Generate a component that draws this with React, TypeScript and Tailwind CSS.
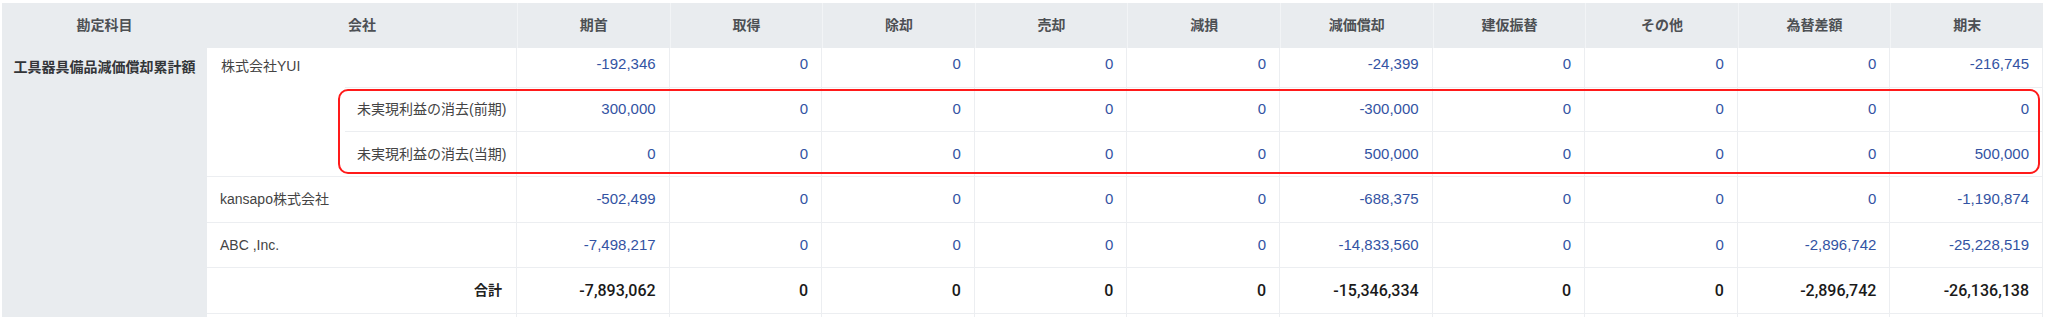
import React from "react";

const COLS = ["期首", "取得", "除却", "売却", "減損", "減価償却", "建仮振替", "その他", "為替差額", "期末"];

type Row = {
  kind: "company" | "sub" | "total";
  label: string;
  values: string[];
};

const ROWS: Row[] = [
  { kind: "company", label: "株式会社YUI", values: ["-192,346", "0", "0", "0", "0", "-24,399", "0", "0", "0", "-216,745"] },
  { kind: "sub", label: "未実現利益の消去(前期)", values: ["300,000", "0", "0", "0", "0", "-300,000", "0", "0", "0", "0"] },
  { kind: "sub", label: "未実現利益の消去(当期)", values: ["0", "0", "0", "0", "0", "500,000", "0", "0", "0", "500,000"] },
  { kind: "company", label: "kansapo株式会社", values: ["-502,499", "0", "0", "0", "0", "-688,375", "0", "0", "0", "-1,190,874"] },
  { kind: "company", label: "ABC ,Inc.", values: ["-7,498,217", "0", "0", "0", "0", "-14,833,560", "0", "0", "-2,896,742", "-25,228,519"] },
  { kind: "total", label: "合計", values: ["-7,893,062", "0", "0", "0", "0", "-15,346,334", "0", "0", "-2,896,742", "-26,136,138"] },
];

const font = "font-['Liberation_Sans','Noto_Sans_CJK_JP',sans-serif]";

function ValueCells({ row, lift }: { row: Row; lift?: boolean }) {
  return (
    <>
      {row.values.map((v, i) => (
        <div
          key={i}
          className={`flex items-center justify-end pr-[13px] border-b border-r border-[#eceef1] ${
            row.kind === "total"
              ? "font-['Roboto','Liberation_Sans',sans-serif] text-[16px] font-medium text-[#1a1a1a]"
              : "text-[15px] text-[#3353a3]"
          } ${lift ? "pb-[6px]" : ""}`}
        >
          {v}
        </div>
      ))}
    </>
  );
}

export default function App() {
  const [yui, sub1, sub2, kansapo, abc, total] = ROWS;

  return (
    <div className={`bg-white w-[2048px] h-[317px] overflow-hidden pl-[2px] pt-[3px] ${font}`}>
      <div className="relative w-[2041px]">
        <div className="grid grid-cols-[205px_138px_172px_repeat(10,minmax(0,1fr))] grid-rows-[45px_40px_44px_45px_46px_45px_46px_45px]">
          {/* header */}
          <div className="bg-[#e9ecef] flex items-center justify-center text-[14px] font-bold text-[#4d5054]">勘定科目</div>
          <div className="col-span-2 bg-[#e9ecef] flex items-center justify-center text-[14px] font-bold text-[#4d5054]">会社</div>
          {COLS.map((c) => (
            <div key={c} className="bg-[#e9ecef] border-l border-[#f2f4f6] flex items-center justify-center text-[14px] font-bold text-[#4d5054]">
              {c}
            </div>
          ))}

          {/* account column */}
          <div className="row-span-7 bg-[#e9ecef] flex justify-center pt-[9px] text-[14px] font-bold text-[#333538]">
            工具器具備品減価償却累計額
          </div>

          {/* 株式会社YUI group */}
          <div className="row-span-3 border-b border-[#eceef1] pl-[14px] pt-[8px] text-[14px] text-[#444] whitespace-nowrap">
            {yui.label}
          </div>
          <div className="border-b border-r border-[#eceef1]" />
          <ValueCells row={yui} lift />

          {[sub1, sub2].map((r) => (
            <React.Fragment key={r.label}>
              <div className="flex items-center pl-[12px] border-b border-r border-[#eceef1] text-[14px] text-[#444] whitespace-nowrap">
                {r.label}
              </div>
              <ValueCells row={r} />
            </React.Fragment>
          ))}

          {[kansapo, abc].map((r) => (
            <React.Fragment key={r.label}>
              <div className="col-span-2 flex items-center pl-[13px] border-b border-r border-[#eceef1] text-[14px] text-[#444] whitespace-nowrap">
                {r.label}
              </div>
              <ValueCells row={r} />
            </React.Fragment>
          ))}

          <div className="col-span-2 flex items-center justify-end pr-[14px] border-b border-r border-[#eceef1] text-[14px] font-bold text-[#222]">
            {total.label}
          </div>
          <ValueCells row={total} />

          {/* next row, cut off */}
          <div className="col-span-2 border-r border-[#eceef1]" />
          {COLS.map((c) => (
            <div key={c} className="border-r border-[#eceef1]" />
          ))}
        </div>

        {/* highlight around the unrealized profit rows */}
        <div className="absolute left-[336px] top-[86px] w-[1702px] h-[85px] border-2 border-[#ff1a1a] rounded-[10px] pointer-events-none" />
      </div>
    </div>
  );
}
